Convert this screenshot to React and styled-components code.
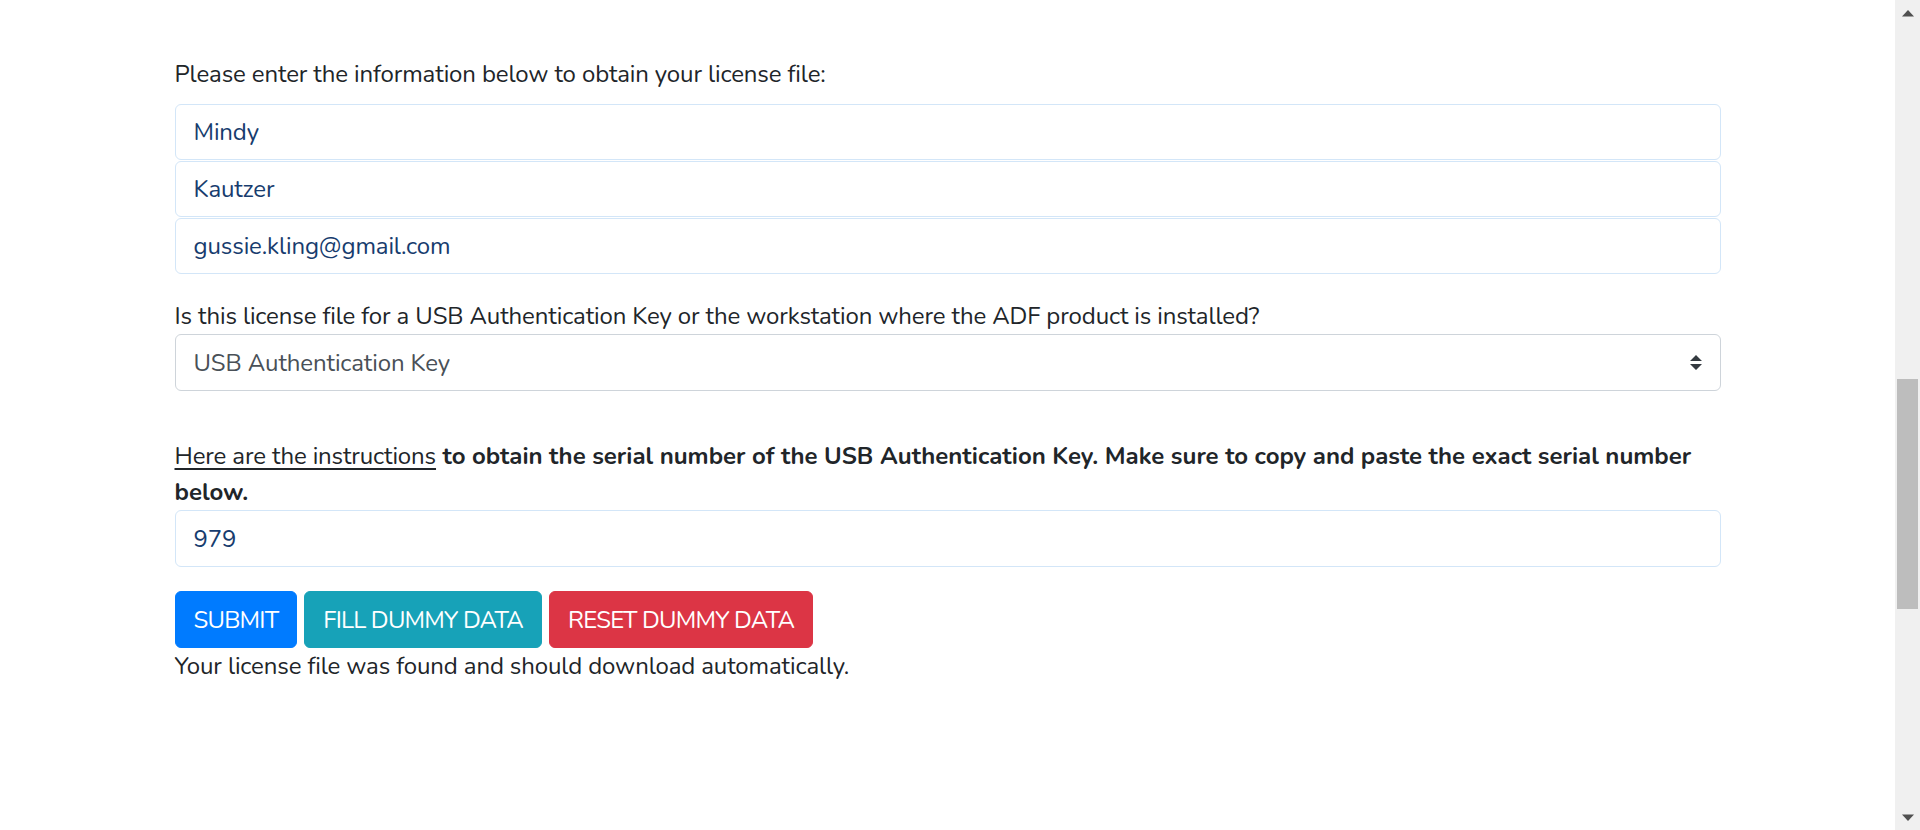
import React from "react";
import styled, { createGlobalStyle } from "styled-components";

const GlobalStyle = createGlobalStyle`
  html, body {
    margin: 0;
    padding: 0;
    height: 100%;
    overflow: hidden;
    background: #ffffff;
  }
  body {
    font-family: "Nunito", Lato, "Open Sans", sans-serif;
    font-size: 24px;
    line-height: 1.5;
    letter-spacing: -0.12px;
    color: #212529;
  }
  * { box-sizing: border-box; }
`;

const Viewport = styled.div`
  display: flex;
  width: 1920px;
  height: 830px;
`;

const Main = styled.main`
  flex: 1;
  display: flex;
  justify-content: center;
  padding-top: 56px;
`;

const Container = styled.form`
  width: 1546px;
  display: flex;
  flex-direction: column;
`;

const FormGroup = styled.div`
  display: flex;
  flex-direction: column;
  margin-bottom: ${(p) => p.$mb ?? 24}px;
`;

const Label = styled.label`
  display: block;
  margin-bottom: ${(p) => (p.$tight ? 0 : 12)}px;
  color: #212529;
`;

const InputStack = styled.div`
  display: flex;
  flex-direction: column;
  gap: 1px;
`;

const TextInput = styled.input`
  display: block;
  width: 100%;
  height: ${(p) => p.$h ?? 56}px;
  padding: 9px 18px;
  font-family: inherit;
  font-size: 24px;
  line-height: 1.5;
  letter-spacing: inherit;
  color: #173c6e;
  background: #ffffff;
  border: 1px solid #d3e6f8;
  border-radius: 6px;
  outline: none;
`;

const SelectWrap = styled.div`
  position: relative;
  width: 100%;
`;

const Select = styled.select`
  display: block;
  width: 100%;
  height: 57px;
  padding: 9px 48px 9px 18px;
  font-family: inherit;
  font-size: 24px;
  line-height: 1.5;
  letter-spacing: inherit;
  color: #495057;
  background: #ffffff;
  border: 1px solid #ced4da;
  border-radius: 6px;
  appearance: none;
  -webkit-appearance: none;
  outline: none;
`;

const SelectArrow = styled.svg`
  position: absolute;
  right: 19px;
  top: 21px;
  width: 12px;
  height: 15px;
  pointer-events: none;
`;

const Instructions = styled.p`
  margin: 0;
  font-weight: 700;
  letter-spacing: 0;
  color: #212529;
`;

const PlainLink = styled.a`
  font-weight: 400;
  letter-spacing: -0.12px;
  color: #212529;
  text-decoration: underline;
  text-underline-offset: 4px;
`;

const ButtonRow = styled.div`
  display: flex;
  gap: 7px;
`;

const colors = {
  primary: "#007bff",
  info: "#17a2b8",
  danger: "#dc3545",
};

const Button = styled.button`
  height: 57px;
  padding: 9px 18px;
  font-family: inherit;
  font-size: 24px;
  line-height: 1.5;
  letter-spacing: -0.8px;
  text-transform: uppercase;
  color: #ffffff;
  background: ${(p) => colors[p.$variant]};
  border: 1px solid ${(p) => colors[p.$variant]};
  border-radius: 6px;
  cursor: pointer;
`;

const Status = styled.div`
  color: #212529;
`;

const ScrollTrack = styled.aside`
  width: 25px;
  height: 830px;
  background: #f0f0f0;
  display: flex;
  flex-direction: column;
  align-items: center;
`;

const ArrowBox = styled.div`
  height: 26px;
  width: 25px;
  display: flex;
  align-items: center;
  justify-content: center;
`;

const ThumbArea = styled.div`
  flex: 1;
  width: 25px;
  display: flex;
  flex-direction: column;
  align-items: center;
`;

const Thumb = styled.div`
  width: 21px;
  background: #bdbdbd;
`;

function Scrollbar() {
  return (
    <ScrollTrack>
      <ArrowBox>
        <svg width="12" height="7" viewBox="0 0 12 7">
          <polygon points="6,0 12,6.5 0,6.5" fill="#505050" />
        </svg>
      </ArrowBox>
      <ThumbArea>
        <Thumb style={{ marginTop: 353, height: 230 }} />
      </ThumbArea>
      <ArrowBox>
        <svg width="12" height="7" viewBox="0 0 12 7">
          <polygon points="0,0.5 12,0.5 6,7" fill="#505050" />
        </svg>
      </ArrowBox>
    </ScrollTrack>
  );
}

export default function App() {
  return (
    <>
      <GlobalStyle />
      <Viewport>
        <Main>
          <Container onSubmit={(e) => e.preventDefault()}>
            <FormGroup>
              <Label>Please enter the information below to obtain your license file:</Label>
              <InputStack>
                <TextInput type="text" defaultValue="Mindy" />
                <TextInput type="text" defaultValue="Kautzer" />
                <TextInput type="email" defaultValue="gussie.kling@gmail.com" />
              </InputStack>
            </FormGroup>
            <FormGroup $mb={47}>
              <Label $tight>
                Is this license file for a USB Authentication Key or the workstation where the ADF product is installed?
              </Label>
              <SelectWrap>
                <Select defaultValue="usb">
                  <option value="usb">USB Authentication Key</option>
                  <option value="ws">Workstation</option>
                </Select>
                <SelectArrow viewBox="0 0 4 5">
                  <path d="M2 0L0 2h4zm0 5L0 3h4z" fill="#343a40" />
                </SelectArrow>
              </SelectWrap>
            </FormGroup>
            <FormGroup>
              <Instructions>
                <PlainLink href="#">Here are the instructions</PlainLink> to obtain the serial number of the USB
                Authentication Key. Make sure to copy and paste the exact serial number below.
              </Instructions>
              <TextInput type="text" defaultValue="979" $h={57} />
            </FormGroup>
            <ButtonRow>
              <Button type="submit" $variant="primary">Submit</Button>
              <Button type="button" $variant="info">Fill dummy data</Button>
              <Button type="button" $variant="danger">Reset dummy data</Button>
            </ButtonRow>
            <Status>Your license file was found and should download automatically.</Status>
          </Container>
        </Main>
        <Scrollbar />
      </Viewport>
    </>
  );
}
